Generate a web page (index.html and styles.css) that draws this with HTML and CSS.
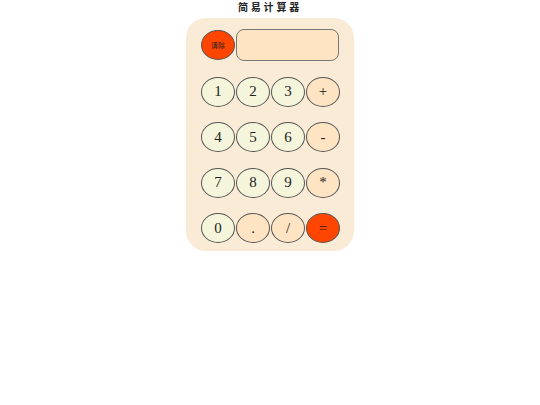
FILE: index.html
```html
<!DOCTYPE html>
<html lang="zh">
<head>
    <meta charset="UTF-8">
    <meta name="viewport" content="width=device-width, initial-scale=1.0">
    <title>简易计算器</title>
    <link rel="stylesheet" href="styles.css">
</head>
<body>
    <h1 class="title">简易计算器</h1>
    <div class="calculator">
        <!-- 顶部：清除按钮 + 显示屏 -->
        <div class="row top-row">
            <button class="btn clear">清除</button>
            <div class="display" id="display"></div>
        </div>
        <div class="row">
            <button class="btn num">1</button>
            <button class="btn num">2</button>
            <button class="btn num">3</button>
            <button class="btn op">+</button>
        </div>
        <div class="row">
            <button class="btn num">4</button>
            <button class="btn num">5</button>
            <button class="btn num">6</button>
            <button class="btn op">-</button>
        </div>
        <div class="row">
            <button class="btn num">7</button>
            <button class="btn num">8</button>
            <button class="btn num">9</button>
            <button class="btn op">*</button>
        </div>
        <div class="row">
            <button class="btn num">0</button>
            <button class="btn op">.</button>
            <button class="btn op">/</button>
            <button class="btn equal">=</button>
        </div>
    </div>
</body>
</html>
```

FILE: styles.css
```css
body {
    margin: 0;
    padding: 0;
    background: #fff;
    font-family: "Liberation Serif", serif;
}
.title {
    margin: 0;
    padding-top: 1px;
    text-align: center;
    font-family: "Noto Sans CJK SC", sans-serif;
    font-size: 10px;
    line-height: 11px;
    font-weight: bold;
    letter-spacing: 2.8px;
    color: #222;
}
.calculator {
    width: 168px;
    margin: 6px auto 0;
    padding: 11px 14px 8px 15px;
    box-sizing: border-box;
    background-color: #faebd7;
    border-radius: 20px;
    display: flex;
    flex-direction: column;
    gap: 15.5px;
}
.row {
    display: flex;
    gap: 1px;
    align-items: center;
}
.top-row {
    height: 32px;
}
.btn {
    width: 34px;
    height: 30px;
    margin: 0;
    padding: 0;
    border: 1px solid #555;
    border-radius: 50%;
    font-family: "Liberation Serif", serif;
    font-size: 15px;
    color: #222;
    cursor: pointer;
    box-sizing: border-box;
}
.num {
    background-color: #f5f5dc;
}
.op {
    background-color: #ffe4c4;
}
.clear, .equal {
    background-color: #ff4500;
}
.clear {
    font-family: "Noto Sans CJK SC", sans-serif;
    font-size: 7px;
    color: #222;
}
.display {
    width: 103px;
    height: 32px;
    box-sizing: border-box;
    border: 1px solid #777;
    border-radius: 8px;
    background-color: #ffe4c4;
}
```
